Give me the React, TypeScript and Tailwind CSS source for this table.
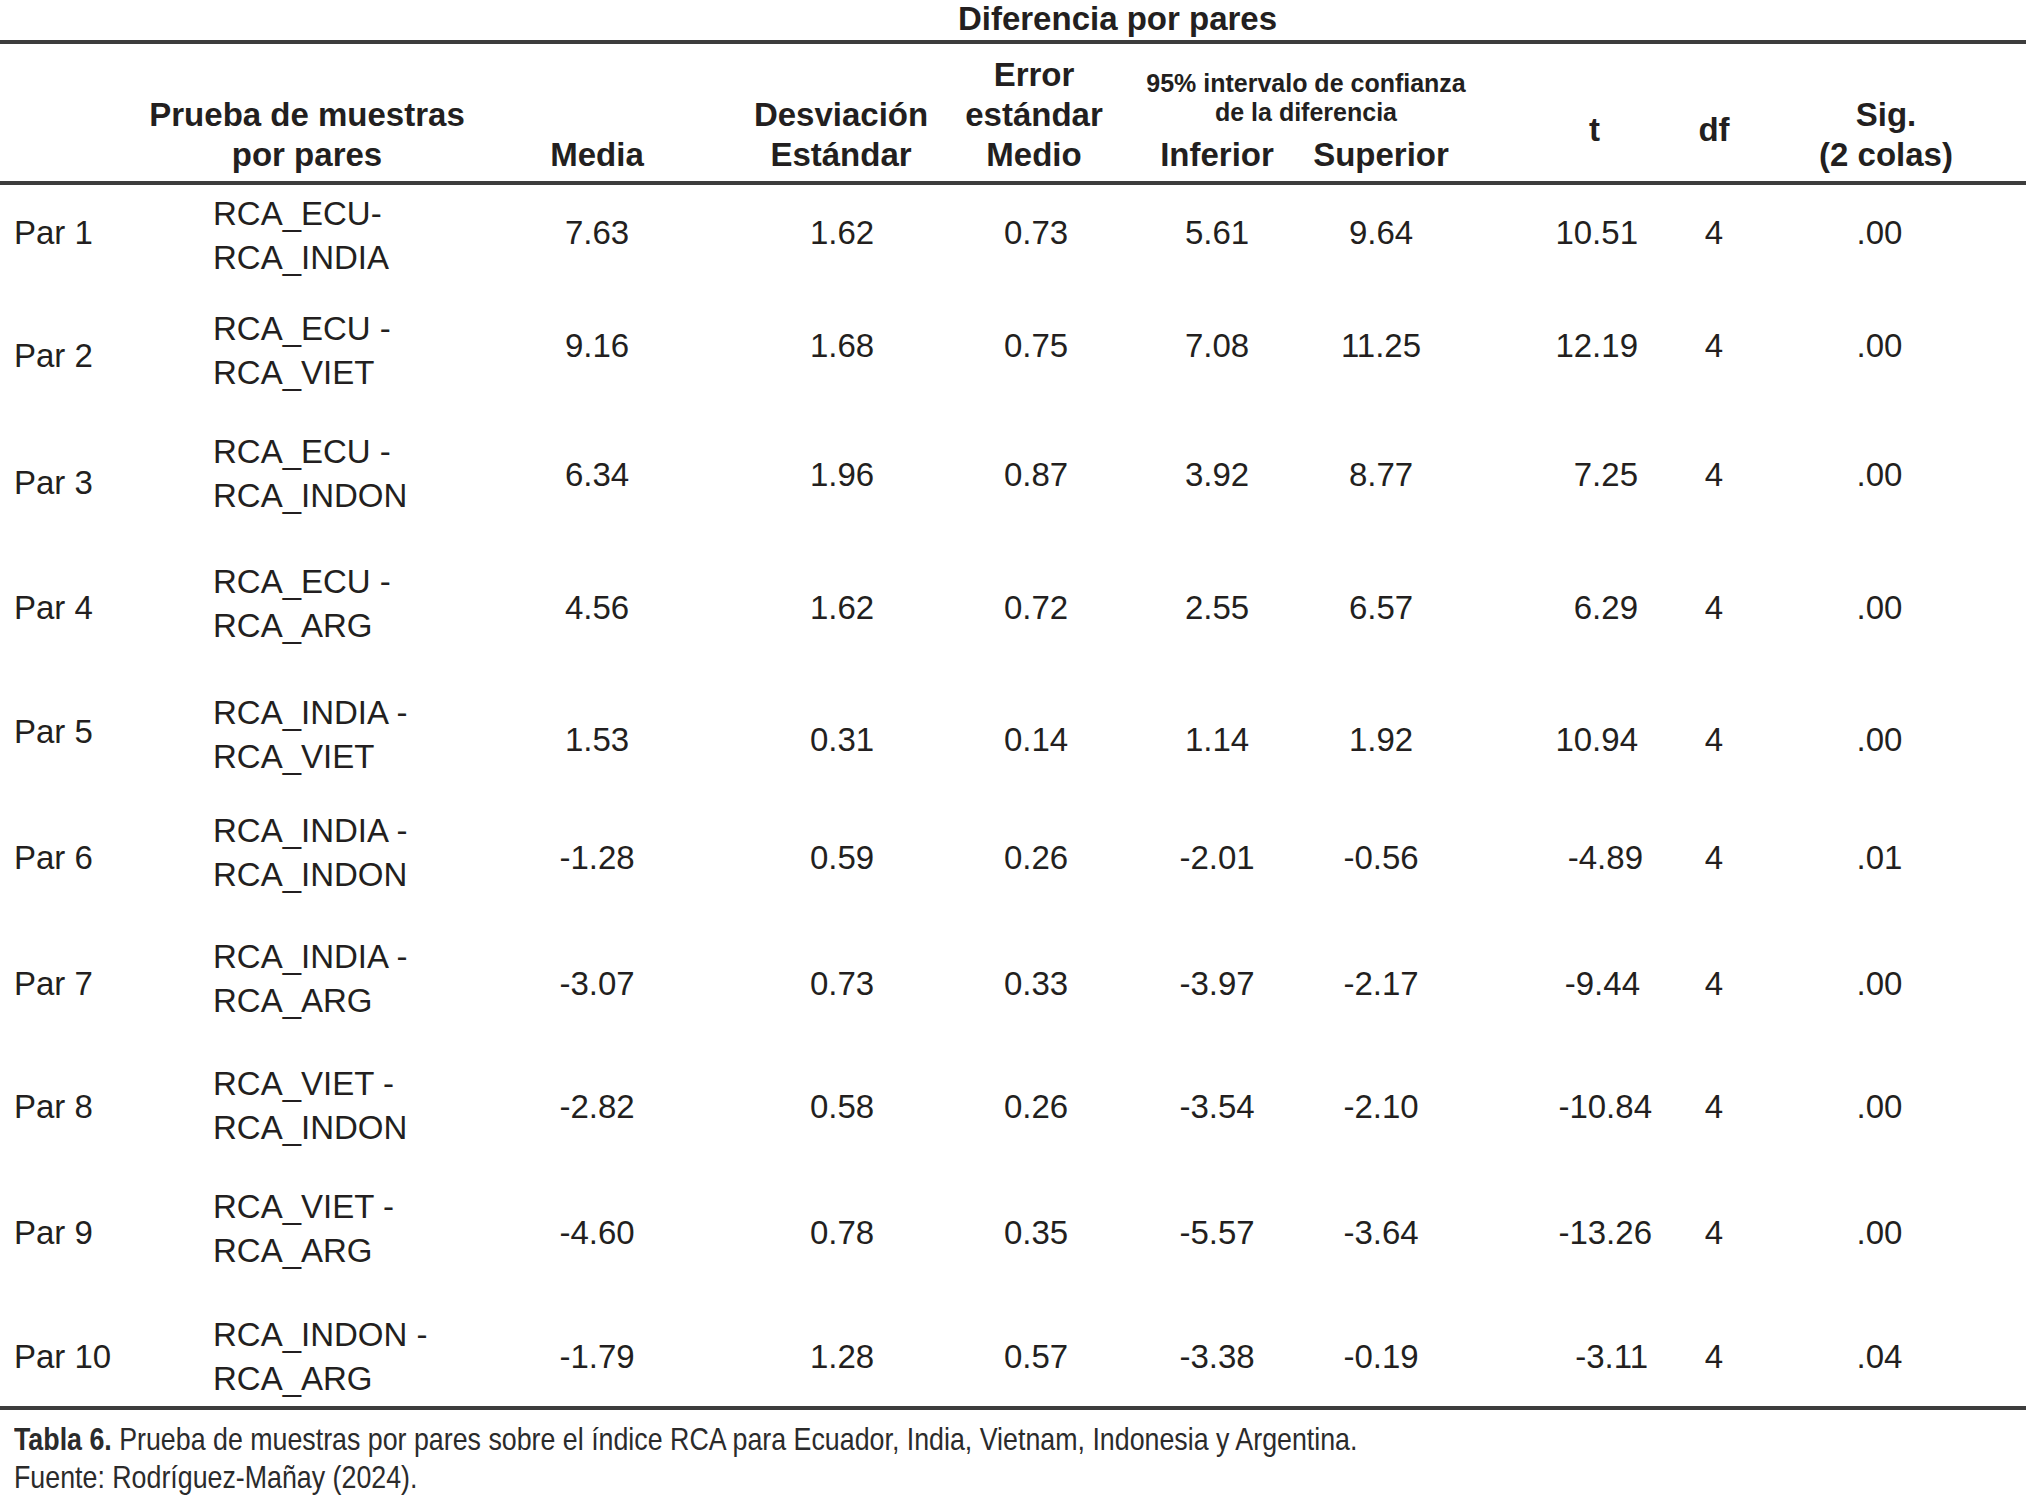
import React from "react";

const COLS =
  "grid grid-cols-[200px_245px_304px_184px_202px_164px_164px_175px_152px_184px]";

type Row = {
  par: string;
  a: string;
  b: string;
  media: string;
  desv: string;
  err: string;
  inf: string;
  sup: string;
  t: string;
  df: string;
  sig: string;
  h: string;
  parPad: string;
  labPad: string;
  tPad: string;
};

const rows: Row[] = [
  { par: "Par 1", a: "RCA_ECU-", b: "RCA_INDIA", media: "7.63", desv: "1.62", err: "0.73", inf: "5.61", sup: "9.64", t: "10.51", df: "4", sig: ".00", h: "h-[95px]", parPad: "", labPad: "pt-[6px]", tPad: "" },
  { par: "Par 2", a: "RCA_ECU -", b: "RCA_VIET", media: "9.16", desv: "1.68", err: "0.75", inf: "7.08", sup: "11.25", t: "12.19", df: "4", sig: ".00", h: "h-[132px]", parPad: "pt-[20px]", labPad: "pt-[9px]", tPad: "" },
  { par: "Par 3", a: "RCA_ECU -", b: "RCA_INDON", media: "6.34", desv: "1.96", err: "0.87", inf: "3.92", sup: "8.77", t: "7.25", df: "4", sig: ".00", h: "h-[126px]", parPad: "pt-[16px]", labPad: "pb-[3px]", tPad: "" },
  { par: "Par 4", a: "RCA_ECU -", b: "RCA_ARG", media: "4.56", desv: "1.62", err: "0.72", inf: "2.55", sup: "6.57", t: "6.29", df: "4", sig: ".00", h: "h-[140px]", parPad: "", labPad: "pb-[8px]", tPad: "" },
  { par: "Par 5", a: "RCA_INDIA -", b: "RCA_VIET", media: "1.53", desv: "0.31", err: "0.14", inf: "1.14", sup: "1.92", t: "10.94", df: "4", sig: ".00", h: "h-[124px]", parPad: "pb-[16px]", labPad: "pb-[11px]", tPad: "" },
  { par: "Par 6", a: "RCA_INDIA -", b: "RCA_INDON", media: "-1.28", desv: "0.59", err: "0.26", inf: "-2.01", sup: "-0.56", t: "-4.89", df: "4", sig: ".01", h: "h-[111px]", parPad: "", labPad: "pb-[10px]", tPad: "-mr-[5px]" },
  { par: "Par 7", a: "RCA_INDIA -", b: "RCA_ARG", media: "-3.07", desv: "0.73", err: "0.33", inf: "-3.97", sup: "-2.17", t: "-9.44", df: "4", sig: ".00", h: "h-[142px]", parPad: "", labPad: "pb-[10px]", tPad: "-mr-[2px]" },
  { par: "Par 8", a: "RCA_VIET -", b: "RCA_INDON", media: "-2.82", desv: "0.58", err: "0.26", inf: "-3.54", sup: "-2.10", t: "-10.84", df: "4", sig: ".00", h: "h-[103px]", parPad: "", labPad: "pb-[1px]", tPad: "-mr-[14px]" },
  { par: "Par 9", a: "RCA_VIET -", b: "RCA_ARG", media: "-4.60", desv: "0.78", err: "0.35", inf: "-5.57", sup: "-3.64", t: "-13.26", df: "4", sig: ".00", h: "h-[150px]", parPad: "", labPad: "pb-[8px]", tPad: "-mr-[14px]" },
  { par: "Par 10", a: "RCA_INDON -", b: "RCA_ARG", media: "-1.79", desv: "1.28", err: "0.57", inf: "-3.38", sup: "-0.19", t: "-3.11", df: "4", sig: ".04", h: "h-[98px]", parPad: "", labPad: "pb-[1px]", tPad: "-mr-[10px]" },
];

function Rule() {
  return <div className="h-[4px] w-full bg-[#3d3d3d]" />;
}

export default function App() {
  return (
    <div className="w-[2026px] h-[1496px] bg-white text-[#231f20] font-['Liberation_Sans',Arial,sans-serif] overflow-hidden">
      {/* Spanner */}
      <div className={`${COLS} h-[40px]`}>
        <div className="col-start-3 col-end-10 flex justify-center font-bold text-[33px] leading-[37px] whitespace-nowrap">
          Diferencia por pares
        </div>
      </div>
      <Rule />
      {/* Header */}
      <div className={`${COLS} h-[137px] font-bold text-[33px] leading-[40px]`}>
        <div className="col-span-2 flex items-end justify-center pl-[169px] pb-[6px]">
          <div className="text-center whitespace-nowrap">
            Prueba de muestras
            <br />
            por pares
          </div>
        </div>
        <div className="flex items-end justify-center pb-[6px] whitespace-nowrap">Media</div>
        <div className="flex items-end justify-center pb-[6px]">
          <div className="text-center whitespace-nowrap">
            Desviación
            <br />
            Estándar
          </div>
        </div>
        <div className="flex items-end justify-center pb-[6px]">
          <div className="text-center whitespace-nowrap">
            Error
            <br />
            estándar
            <br />
            Medio
          </div>
        </div>
        <div className="col-span-2 flex flex-col items-center justify-end pb-[6px]">
          <div className="ml-[14px] mb-[8px] text-center text-[25px] leading-[29px] whitespace-nowrap">
            95% intervalo de confianza
            <br />
            de la diferencia
          </div>
          <div className="grid grid-cols-[164px_164px] w-full">
            <div className="text-center">Inferior</div>
            <div className="text-center">Superior</div>
          </div>
        </div>
        <div className="flex items-end justify-end pr-[38px] pb-[31px]">t</div>
        <div className="flex items-end justify-center pb-[31px]">df</div>
        <div className="flex items-end justify-center pl-[8px] pb-[6px]">
          <div className="text-center whitespace-nowrap">
            Sig.
            <br />
            (2 colas)
          </div>
        </div>
      </div>
      <Rule />
      {/* Body */}
      <div className="text-[33px] leading-[40px]">
        {rows.map((r) => (
          <div key={r.par} className={`${COLS} ${r.h} items-center`}>
            <div className={`pl-[14px] whitespace-nowrap ${r.parPad}`}>{r.par}</div>
            <div className={`pl-[13px] leading-[44px] whitespace-nowrap ${r.labPad}`}>
              {r.a}
              <br />
              {r.b}
            </div>
            <div className="text-center">{r.media}</div>
            <div className="text-center pl-[2px]">{r.desv}</div>
            <div className="text-center pl-[4px]">{r.err}</div>
            <div className="text-center">{r.inf}</div>
            <div className="text-center">{r.sup}</div>
            <div className={`text-right whitespace-nowrap ${r.tPad}`}>{r.t}</div>
            <div className="text-center">{r.df}</div>
            <div className="text-center pr-[5px]">{r.sig}</div>
          </div>
        ))}
      </div>
      <Rule />
      {/* Caption */}
      <div className="mt-[10px] pl-[14px] text-[32px] leading-[38px] text-[#2b2b2b]">
        <div className="origin-left scale-x-[0.837] whitespace-nowrap">
          <span className="font-bold">Tabla 6.</span> Prueba de muestras por pares sobre el índice RCA para Ecuador, India, Vietnam, Indonesia y Argentina.
        </div>
        <div className="origin-left scale-x-[0.837] whitespace-nowrap">Fuente: Rodríguez-Mañay (2024).</div>
      </div>
    </div>
  );
}
